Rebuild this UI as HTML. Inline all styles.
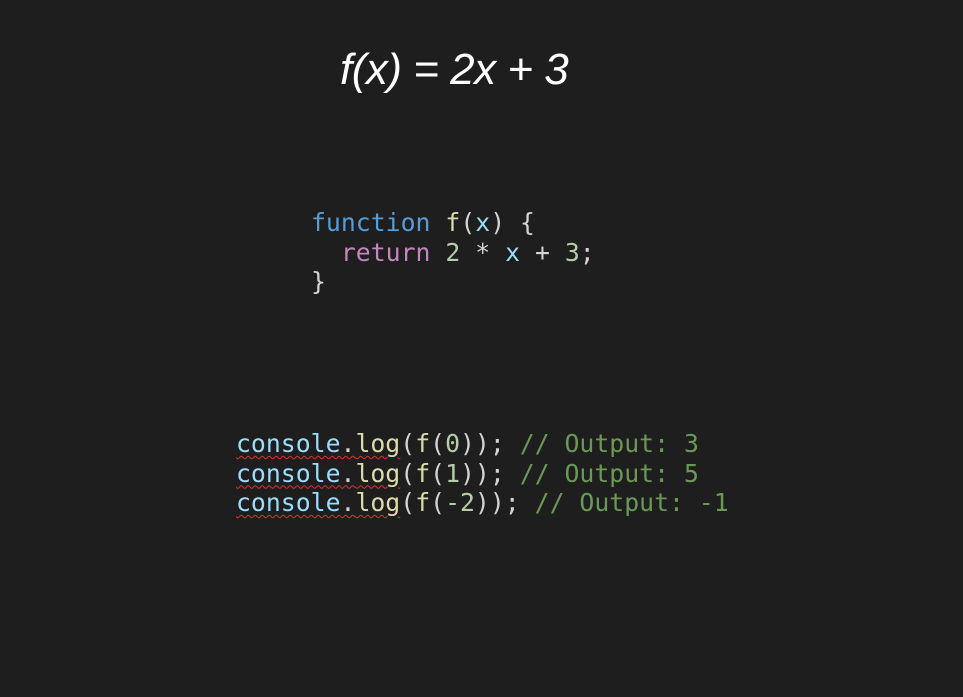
<!DOCTYPE html>
<html><head><style>
body{margin:0;width:963px;height:697px;background:#1e1e1e;position:relative;overflow:hidden}
.t{position:absolute;left:340px;top:45px;font:italic 44px "Liberation Sans",sans-serif;color:#fff;white-space:pre;letter-spacing:-0.5px}
.c{position:absolute;font:24.8px/29.5px "DejaVu Sans Mono",monospace;white-space:pre;color:#d4d4d4}
.k{color:#569cd6}.f{color:#dcdcaa}.v{color:#9cdcfe}.r{color:#c586c0}.n{color:#b5cea8}.m{color:#6a9955}
.u{text-decoration:underline wavy #e03030;text-decoration-thickness:1px;text-underline-offset:3px}
</style></head><body>
<div class="t">f(x) = 2x + 3</div>
<div class="c" style="left:311px;top:208px"><span class="k">function</span> <span class="f">f</span>(<span class="v">x</span>) {
  <span class="r">return</span> <span class="n">2</span> * <span class="v">x</span> + <span class="n">3</span>;
}</div>
<div class="c" style="left:236px;top:429px"><span class="u"><span class="v">console</span>.<span class="f">log</span></span>(<span class="f">f</span>(<span class="n">0</span>)); <span class="m">// Output: 3</span>
<span class="u"><span class="v">console</span>.<span class="f">log</span></span>(<span class="f">f</span>(<span class="n">1</span>)); <span class="m">// Output: 5</span>
<span class="u"><span class="v">console</span>.<span class="f">log</span></span>(<span class="f">f</span>(<span class="n">-2</span>)); <span class="m">// Output: -1</span></div>
</body></html>
